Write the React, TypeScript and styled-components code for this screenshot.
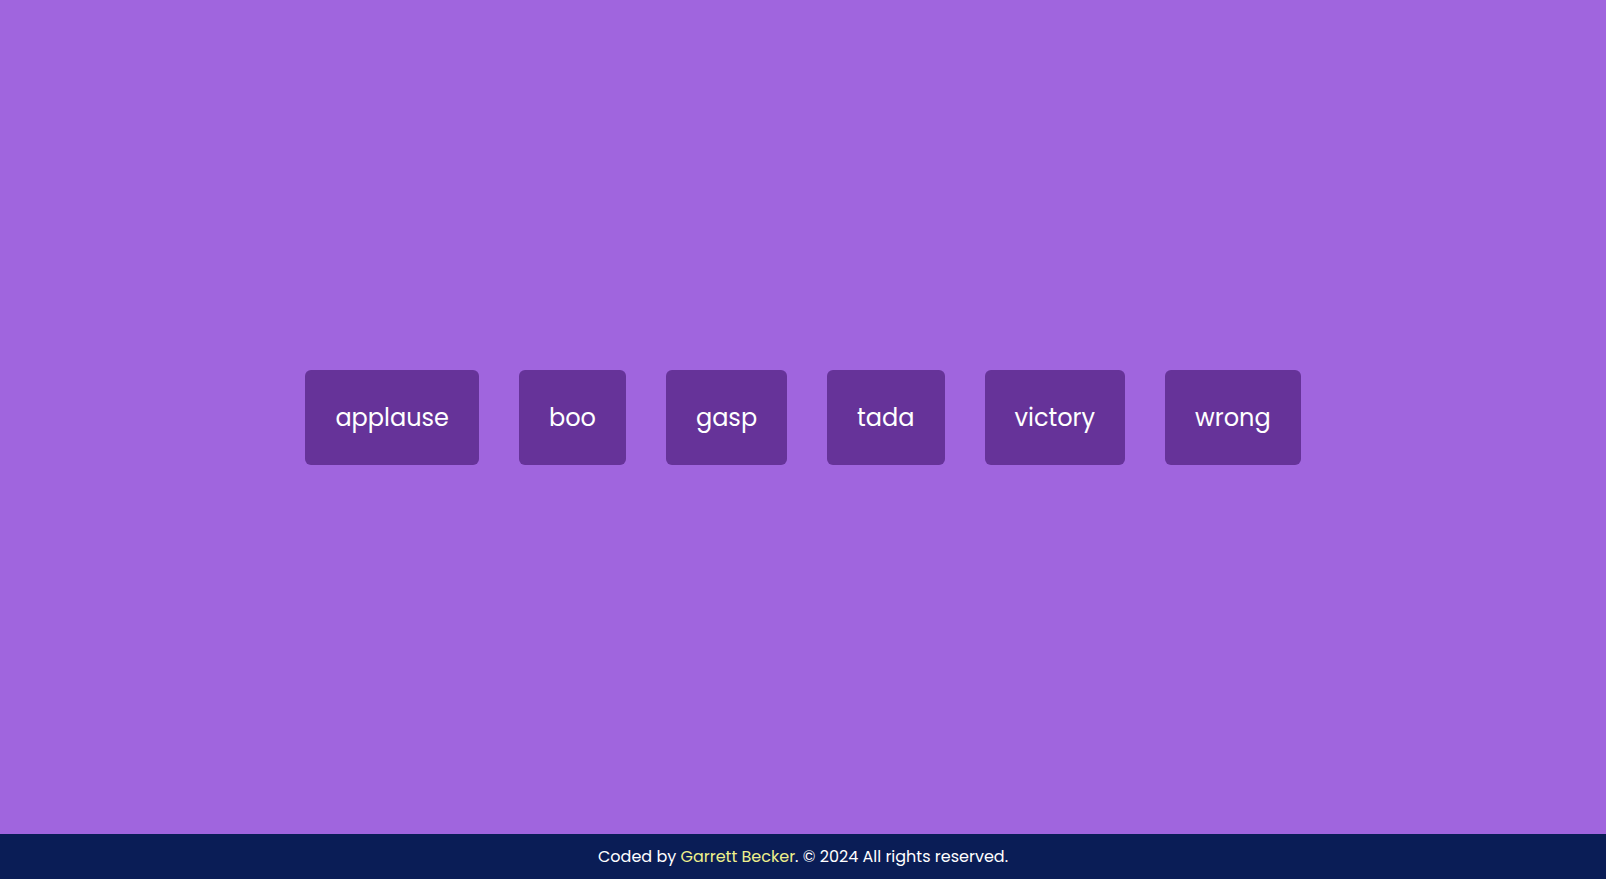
import React from "react";
import styled, { createGlobalStyle } from "styled-components";

const Global = createGlobalStyle`
  html, body { margin: 0; padding: 0; }
  body {
    background: #a065de;
    font-family: "Poppins", "Inter", "Noto Sans", sans-serif;
  }
`;

const Page = styled.div`
  display: flex;
  flex-direction: column;
  height: 879px;
`;

const Main = styled.main`
  flex: 1;
  display: flex;
  align-items: center;
  justify-content: center;
  gap: 40px;
`;

const SoundButton = styled.button`
  background: #663399;
  color: #ffffff;
  border: none;
  outline: none;
  border-radius: 6px;
  font-family: inherit;
  font-size: 24px;
  line-height: 36px;
  padding: 30px 30px 29px;
  cursor: pointer;
`;

const Footer = styled.footer`
  height: 45px;
  background: #0a1d56;
  color: #ffffff;
  display: flex;
  align-items: center;
  justify-content: center;
  font-size: 16px;
`;

const Link = styled.a`
  color: #eef08c;
  text-decoration: none;
`;

const sounds = ["applause", "boo", "gasp", "tada", "victory", "wrong"];

export default function App() {
  return (
    <>
      <Global />
      <Page>
        <Main>
          {sounds.map((s) => (
            <SoundButton key={s}>{s}</SoundButton>
          ))}
        </Main>
        <Footer>
          <span>
            Coded by <Link href="#">Garrett Becker</Link>. © 2024 All rights reserved.
          </span>
        </Footer>
      </Page>
    </>
  );
}
